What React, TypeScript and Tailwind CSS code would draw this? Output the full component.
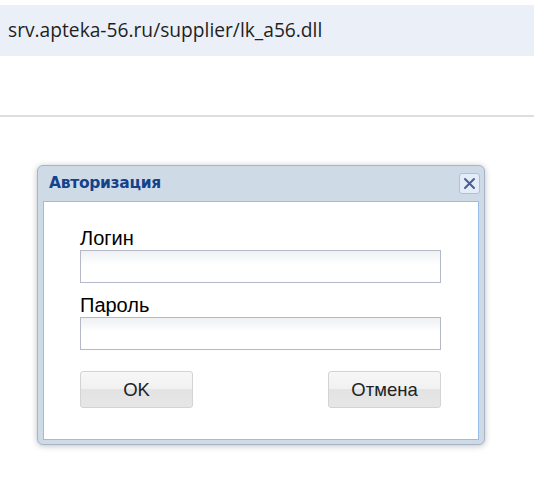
import React from "react";

function CloseIcon() {
  return (
    <svg width="13" height="13" viewBox="0 0 13 13">
      <path d="M2 2 L11 11 M11 2 L2 11" stroke="#4a5f8c" strokeWidth="2" strokeLinecap="round" />
    </svg>
  );
}

const btn =
  "w-[113px] h-[37px] rounded-[3px] border border-[#d3d3d3] bg-[linear-gradient(#f7f7f7_0%,#f1f1f1_50%,#e3e3e3_50%,#e6e6e6_100%)] flex items-center justify-center text-[18.5px] text-[#222]";

export default function App() {
  return (
    <div className="w-[534px] h-[502px] bg-white overflow-hidden" style={{ fontFamily: '"Liberation Sans", Arial, sans-serif' }}>
      {/* address strip */}
      <div className="mt-[5px] h-[51px] bg-[#ebf0f8] flex items-center pl-[8px]">
        <span className="text-[19.2px] text-[#1f1f1f]" style={{ fontFamily: '"Open Sans", "Noto Sans", sans-serif' }}>
          srv.apteka-56.ru/supplier/lk_a56.dll
        </span>
      </div>
      <div className="mt-[59px] h-[2px] bg-[#dedede]" />

      {/* login window */}
      <div className="ml-[37px] mt-[48px] w-[448px] rounded-[6px] border border-[#a6b4c8] bg-[#cfdae7] shadow-[0_1px_6px_rgba(0,0,0,0.25)] px-[5px] pb-[4px]">
        <div className="h-[35px] flex items-center justify-between">
          <span className="pl-[6px] text-[15.5px] font-bold text-[#15428b] leading-none" style={{ fontFamily: '"DejaVu Sans", sans-serif', letterSpacing: "-0.3px" }}>
            Авторизация
          </span>
          <div className="-mr-[1px] w-[21px] h-[21px] rounded-[3px] border border-[#a9c1e3] bg-[#e4ecf8] flex items-center justify-center">
            <CloseIcon />
          </div>
        </div>
        <div className="border border-[#99bbe8] bg-white pl-[36px] pr-[37px] pt-[25px] pb-[31px]">
          <div className="text-[20px] leading-[23px] text-black">Логин</div>
          <div className="h-[33px] border border-[#b5b8c8] bg-[linear-gradient(#eef0f2,#ffffff_45%)]" />
          <div className="mt-[11px] text-[20px] leading-[23px] text-black">Пароль</div>
          <div className="h-[33px] border border-[#b5b8c8] bg-[linear-gradient(#eef0f2,#ffffff_45%)]" />
          <div className="mt-[21px] flex justify-between">
            <div className={btn}>OK</div>
            <div className={btn}>Отмена</div>
          </div>
        </div>
      </div>
    </div>
  );
}
